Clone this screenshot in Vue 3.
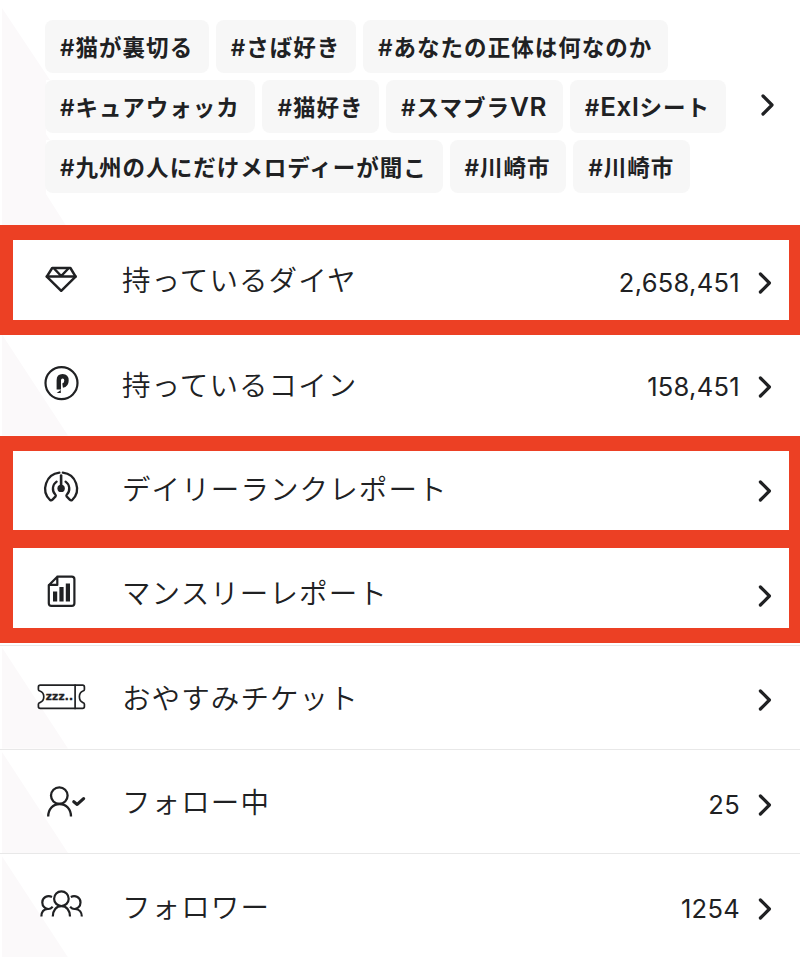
<template>
    <div class="page">
        <section class="tags">
            <div class="tag-list">
                <div v-for="(line, i) in tagLines" :key="i" class="tag-line">
                    <span v-for="(tag, j) in line" :key="j" class="tag">#<span v-if="tag.before">{{ tag.before }}</span><span v-if="tag.latin" class="latin">{{ tag.latin }}</span>{{ tag.text }}</span>
                </div>
            </div>
            <svg class="arrow" viewBox="0 0 14 24">
                <path d="M2 3 L11 12 L2 21" />
            </svg>
        </section>

        <ul class="menu">
            <li v-for="item in items" :key="item.icon" class="row" :class="{ framed: item.framed, lined: item.lined }">
                <svg class="icon" viewBox="0 0 60 60">
                    <g v-if="item.icon === 'diamond'" stroke-width="2.5">
                        <path d="M21.2 19H39.4L44.6 27.6L30.2 41.8L15.8 27.6Z" />
                        <path d="M15.8 27.6H44.6M23.5 20L30.2 27L36.9 20" />
                    </g>
                    <g v-else-if="item.icon === 'coin'" stroke-width="2.2">
                        <circle cx="30.5" cy="29.1" r="16" />
                        <path class="butt" stroke-width="4.4" d="M27.8 35.4V26.2C27.8 23.6 29.1 22.2 31.6 22.2C34.2 22.2 35.5 23.8 35.5 26.6C35.5 29.4 34.4 31.2 31.6 31.6" />
                        <path class="solid" d="M29.8 36V38.9H25.7Z" />
                    </g>
                    <g v-else-if="item.icon === 'gauge'" stroke-width="2.3">
                        <path d="M28.4 14.7A16 16 0 0 0 19 42Q20.3 42.8 21.5 41.6L24.6 38.4Q25.2 37.4 24.3 36.5A8.5 8.5 0 0 1 25.6 23.6" />
                        <path d="M31.8 14.7A16 16 0 0 1 41.2 42Q39.9 42.8 38.7 41.6L35.6 38.4Q35 37.4 35.9 36.5A8.5 8.5 0 0 0 34.6 23.6" />
                        <path d="M30.1 17.6V29" stroke-width="2.6" />
                        <circle class="solid" cx="30.1" cy="30.4" r="3.7" />
                    </g>
                    <g v-else-if="item.icon === 'report'" stroke-width="2.2">
                        <path d="M26.3 14.7H40.8Q43.4 14.7 43.4 17.3V41.3Q43.4 43.9 40.8 43.9H20.4Q17.8 43.9 17.8 41.3V23.2ZV22.9H18" />
                        <path class="solid" d="M22 29.6h4.2v10H22ZM28.4 24.9h4.2v14.7h-4.2ZM34.8 21.6h4.2v18h-4.2Z" />
                    </g>
                    <g v-else-if="item.icon === 'ticket'" stroke-width="1.7">
                        <path d="M9.2 18.2H51.6Q53.4 18.2 53.4 20V22.4Q53.4 23.6 52 24Q48.4 25.4 48.4 29.8T52 35.6Q53.4 36 53.4 37.2V39.6Q53.4 41.4 51.6 41.4H9.2Q7.4 41.4 7.4 39.6V37.2Q7.4 36 8.8 35.6Q12.8 34.2 12.8 29.8T8.8 24Q7.4 23.6 7.4 22.4V20Q7.4 18.2 9.2 18.2Z" />
                        <path d="M44.1 18.2V41.4" />
                        <text x="14.8" y="32.6">zzz..</text>
                    </g>
                    <g v-else-if="item.icon === 'following'" stroke-width="2.3">
                        <circle cx="28.3" cy="24.6" r="8.3" />
                        <path class="butt" d="M17.2 45.6C17.2 38.4 22 33 28.6 33S40 38.4 40 45.6" />
                        <path stroke-width="3.2" d="M42.8 30.8L46.2 33.4L52.6 27.6" />
                    </g>
                    <g v-else stroke-width="2.2">
                        <circle cx="30.4" cy="22.7" r="7.3" />
                        <path class="butt" d="M21.8 40.6C21.8 34.4 25.3 30.2 30.4 30.2S39 34.4 39 40.6" />
                        <path class="butt" d="M21 20.9C16.2 18.6 11.3 21.8 11.3 26.4C11.3 30.6 14.6 33 17.5 33Q19.6 33 21.7 30.8M10.4 40.6C10.4 36.8 12 33 16.8 33" />
                        <path class="butt" d="M39.8 20.9C44.6 18.6 49.5 21.8 49.5 26.4C49.5 30.6 46.2 33 43.3 33Q41.2 33 39.1 30.8M50.8 40.6C50.8 36.8 48.8 33 44 33" />
                    </g>
                </svg>
                <span class="label">{{ item.label }}</span>
                <span class="value">{{ item.value }}</span>
                <svg class="arrow" viewBox="0 0 14 24">
                    <path d="M2.4 3 L11.4 12 L2.4 21" />
                </svg>
            </li>
        </ul>
    </div>
</template>

<script setup>
const tagLines = [
    [{ text: '猫が裏切る' }, { text: 'さば好き' }, { text: 'あなたの正体は何なのか' }],
    [{ text: 'キュアウォッカ' }, { text: '猫好き' }, { before: 'スマブラ', latin: 'VR' }, { latin: 'Exl', text: 'シート' }],
    [{ text: '九州の人にだけメロディーが聞こ' }, { text: '川崎市' }, { text: '川崎市' }]
]

const items = [
    { icon: 'diamond', label: '持っているダイヤ', value: '2,658,451', framed: true },
    { icon: 'coin', label: '持っているコイン', value: '158,451' },
    { icon: 'gauge', label: 'デイリーランクレポート', framed: true },
    { icon: 'report', label: 'マンスリーレポート', framed: true },
    { icon: 'ticket', label: 'おやすみチケット', lined: true },
    { icon: 'following', label: 'フォロー中', value: '25', lined: true },
    { icon: 'followers', label: 'フォロワー', value: '1254', lined: true }
]
</script>

<style>
body {
    margin: 0;
    background: #fff;
}
</style>

<style scoped>
.page {
    width: 800px;
    height: 957px;
    overflow: hidden;
    background: #fff;
    color: #202123;
    font-family: Inter, "Noto Sans CJK JP", sans-serif;
}

.tags {
    position: relative;
    display: flex;
    box-sizing: border-box;
    height: 227px;
    padding: 20px 25px 0 45px;
}

/* 左側の薄い三角の背景 */
.tags::before,
.row::before {
    content: "";
    position: absolute;
    inset: 0;
    background: #fbf9fa;
}

.tags::before {
    clip-path: polygon(2px 8px, 50px 80px, 46px 80px, 46px 134px, 50px 140px, 46px 140px, 46px 194px, 67px 227px, 2px 227px);
}

.row::before {
    clip-path: polygon(2px 3px, 68px 104px, 2px 104px);
}

.tag-list {
    position: relative;
    flex: 1;
    display: flex;
    flex-direction: column;
    gap: 7px;
}

.tag-line {
    display: flex;
    gap: 7px;
}

.tag {
    height: 53px;
    padding: 0 15.6px 0 15px;
    border-radius: 8px;
    background: #f7f7f7;
    font-size: 22.5px;
    font-weight: 600;
    line-height: 55.5px;
    letter-spacing: 1.03px;
    white-space: nowrap;
}

.latin {
    font-size: 26px;
    font-weight: 600;
    line-height: 1;
    letter-spacing: .6px;
}

.arrow {
    position: relative;
    flex: none;
    width: 14px;
    height: 24px;
    fill: none;
    stroke: #202123;
    stroke-width: 3.2;
    stroke-linecap: round;
    stroke-linejoin: round;
}

.tags .arrow {
    margin-top: 73px;
}

.menu {
    margin: 0;
    padding: 0;
    list-style: none;
}

.row {
    position: relative;
    display: flex;
    align-items: center;
    box-sizing: border-box;
    height: 104.4px;
    padding: 0 28px 0 31px;
}

.lined {
    box-shadow: inset 0 1px #e8e8e8;
}

/* 強調表示の赤枠 */
.framed::before {
    display: none;
}

.framed::after {
    content: "";
    position: absolute;
    inset: -2px 0 -3.4px;
    border: solid #ec4024;
    border-width: 15px 11px 15px 13px;
    z-index: 1;
}

.framed:nth-child(3)::after {
    top: .2px;
    bottom: -5px;
}

.framed:nth-child(4)::after {
    top: -7px;
    bottom: 1.8px;
}

.icon {
    position: relative;
    flex: none;
    width: 60px;
    height: 60px;
    fill: none;
    stroke: #202123;
    stroke-linecap: round;
    stroke-linejoin: round;
}

.icon .butt {
    stroke-linecap: butt;
}

.icon .solid {
    fill: #202123;
    stroke: none;
}

.icon text {
    fill: #202123;
    stroke: #202123;
    stroke-width: .4;
    font: bold 10.5px "DejaVu Sans", sans-serif;
    letter-spacing: .2px;
}

.label {
    position: relative;
    flex: 1;
    margin-left: 31px;
    font-family: "Noto Sans CJK JP", sans-serif;
    font-size: 28.5px;
    font-weight: 350;
    line-height: 40px;
    letter-spacing: 1.1px;
    white-space: nowrap;
}

.value {
    position: relative;
    margin: 7px 18px 0 0;
    font-size: 25.5px;
    line-height: 30px;
    letter-spacing: .3px;
}

.row .arrow {
    margin-top: 7px;
}
</style>
